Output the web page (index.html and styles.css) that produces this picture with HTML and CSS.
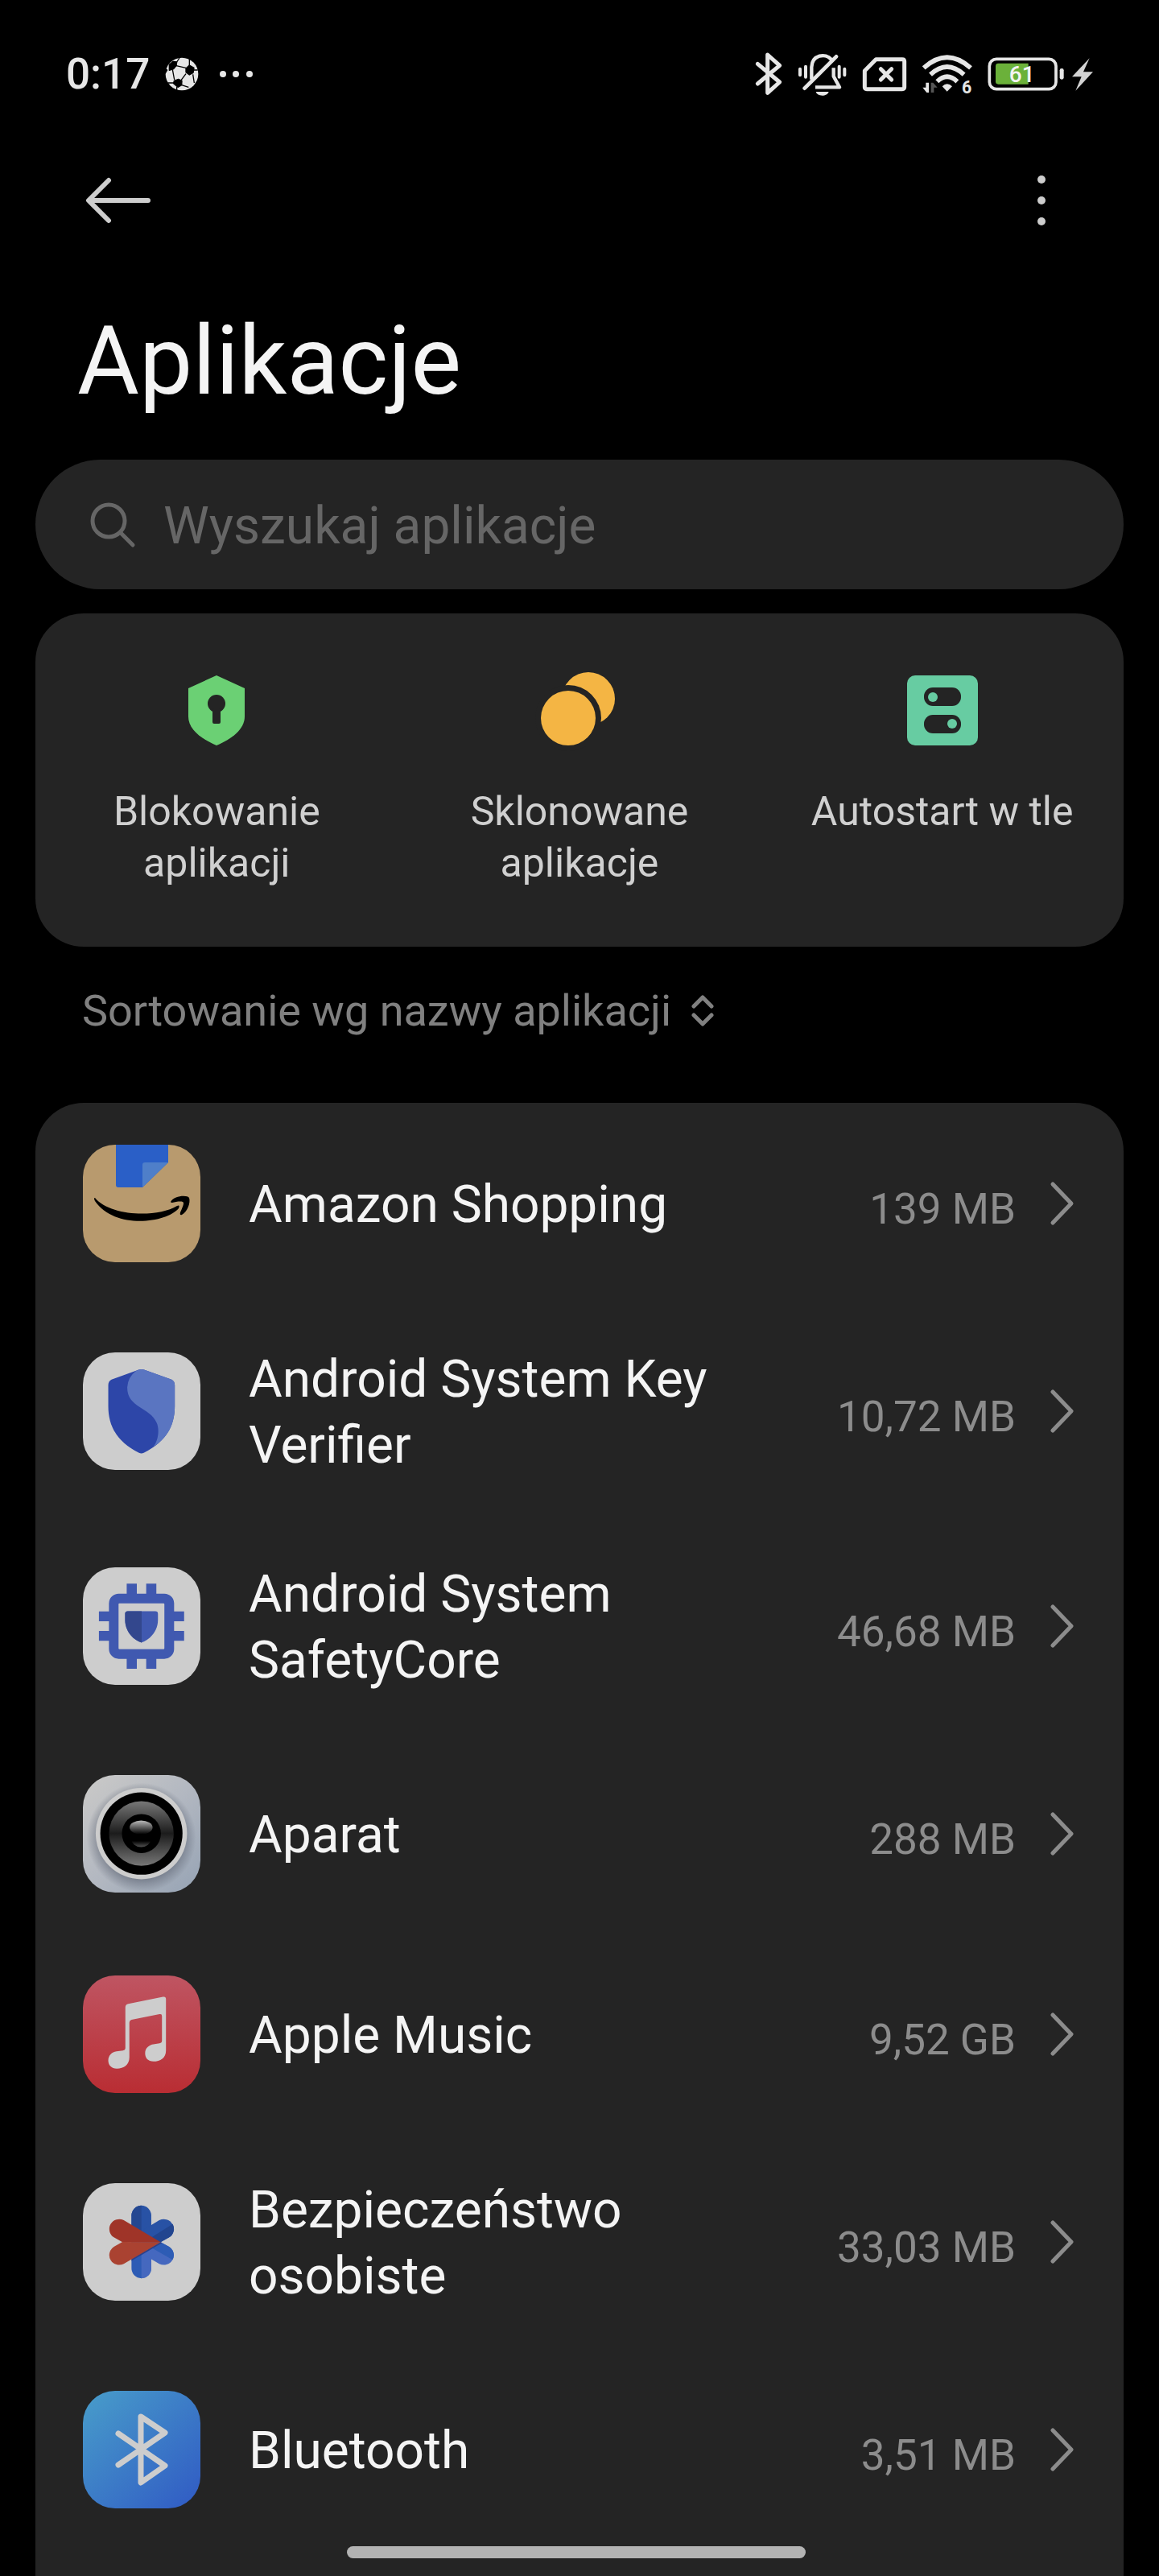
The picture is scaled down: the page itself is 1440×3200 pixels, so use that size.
FILE: index.html
```html
<!DOCTYPE html>
<html lang="pl">
<head>
  <meta charset="UTF-8">
  <title>Aplikacje</title>
  <meta name="viewport" content="width=device-width, initial-scale=1.0"/>
  <link rel="stylesheet" href="styles.css">
</head>
<body>

  <div class="status-bar">
    <div class="status-left">
      <span class="time">0:17</span>
      <svg class="ball" width="42" height="42" viewBox="436 94 126 126">
        <circle cx="499" cy="157" r="61" fill="#e6e6e6"/>
        <g fill="#000" stroke="#000" stroke-width="4" stroke-linejoin="round">
          <path d="M452 122L466 110L480 112L478 126L468 138L452 143Z"/>
          <path d="M514 136L527 124L544 134L541 152L527 160L514 150Z"/>
          <path d="M470 182L486 176L499 182L498 198L484 206L468 192Z"/>
          <path d="M553 188L562 178L556 198L546 204Z"/>
          <path d="M437 154L444 142L438 140Z"/>
        </g>
        <path d="M480 112L490 97M478 126L514 134M527 124V100M541 142H558M464 140L471 178M496 180L514 156M540 158L545 190M498 198L524 206M470 190H446M480 204V216" fill="none" stroke="#000" stroke-width="4"/>
      </svg>
      <svg class="more-dots" width="42" height="10" viewBox="0 0 42 10" fill="#e6e6e6">
        <circle cx="5" cy="5" r="4"/><circle cx="21" cy="5" r="4"/><circle cx="38" cy="5" r="4"/>
      </svg>
    </div>
    <div class="status-right">
      <svg width="35" height="54" viewBox="105 75 105 162" fill="none" stroke="#e6e6e6" stroke-width="15" stroke-linecap="round" stroke-linejoin="round">
        <path d="M115 118L197 186L152 226V84L197 124L115 192"/>
      </svg>
      <svg width="62" height="55" viewBox="266 75 186 165" fill="none" stroke="#e6e6e6" stroke-width="12" stroke-linecap="round">
        <path d="M275 137V160M296 128V167M421 128V167M441 137V160"/>
        <path d="M318 176V130C320 84 370 76 392 102" stroke-width="13" stroke-linecap="butt"/>
        <path d="M292 209L410 91" stroke-width="14"/>
        <path d="M400 133V164L422 205H332" stroke-width="13" stroke-linecap="butt" stroke-linejoin="round"/>
        <path d="M334 222H382C376 241 340 241 334 222Z" fill="#e6e6e6" stroke="none"/>
      </svg>
      <svg width="56" height="44" viewBox="510 95 168 132" fill="none" stroke="#e6e6e6" stroke-width="15" stroke-linejoin="round" stroke-linecap="round">
        <path d="M562 106H660Q668 106 668 114V210Q668 217 660 217H528Q520 217 520 210V149Z"/>
        <path d="M580 142L620 182M620 142L580 182"/>
      </svg>
      <svg width="64" height="50" viewBox="733 85 192 150" fill="none" stroke="#e6e6e6" stroke-width="17">
        <path d="M741 137Q828 58 916 137"/>
        <path d="M766 162Q828 104 891 162"/>
        <path d="M791 188Q828 152 866 188"/>
        <path d="M810 206Q828 188 847 206L828 225Z" fill="#e6e6e6" stroke="none"/>
        <path d="M760 192V229H752L737 210H749V192Z" fill="#e6e6e6" stroke="none"/>
        <path d="M768 229V192H776L792 210H779V229Z" fill="#555" stroke="none"/>
        <text class="wifi-gen" x="883" y="231">6</text>
      </svg>
      <svg width="95" height="42" viewBox="982 94 285 126">
        <rect x="989" y="101" width="248" height="112" rx="26" fill="none" stroke="#e6e6e6" stroke-width="11"/>
        <path d="M1022 117H1134V195H1022Q1012 195 1012 185V127Q1012 117 1022 117Z" fill="#6bb13a"/>
        <rect x="1251" y="136" width="15" height="41" rx="7" fill="#e6e6e6"/>
        <text class="battery-level" x="1110" y="187">61</text>
      </svg>
      <svg class="bolt" width="26" height="41" viewBox="1296 95 78 123" fill="#d2d2d2">
        <path d="M1361 96L1296 165H1331L1309 217L1374 147H1338Z"/>
      </svg>
    </div>
  </div>

  <header class="top-bar">
    <button type="button" class="icon-btn" aria-label="Wstecz">
      <svg width="82" height="58" viewBox="0 0 82 58" fill="none" stroke="#cdcdcd" stroke-width="6" stroke-linecap="round" stroke-linejoin="round">
        <path d="M78 29H5M29 4L4 29L29 54"/>
      </svg>
    </button>
    <button type="button" class="icon-btn" aria-label="Więcej opcji">
      <svg width="12" height="64" viewBox="0 0 12 64" fill="#cdcdcd">
        <circle cx="6" cy="6" r="5"/><circle cx="6" cy="32" r="5"/><circle cx="6" cy="58" r="5"/>
      </svg>
    </button>
  </header>

  <h1>Aplikacje</h1>

  <label class="search">
    <svg width="58" height="58" viewBox="0 0 58 58" fill="none" stroke="#666" stroke-width="5" stroke-linecap="round">
      <circle cx="24" cy="24" r="20"/><path d="M39 39L54 54"/>
    </svg>
    <input type="search" placeholder="Wyszukaj aplikacje" aria-label="Wyszukaj aplikacje">
  </label>

  <nav class="card quick">
    <a href="#">
      <svg width="92" height="92" viewBox="0 0 92 92">
        <path d="M46 4L81 20V55C81 71 65 83 46 91C27 83 11 71 11 55V20Z" fill="#6bd074"/>
        <circle cx="46" cy="39" r="11" fill="#242424"/>
        <rect x="41" y="45" width="10" height="19" rx="2" fill="#242424"/>
      </svg>
      Blokowanie aplikacji
    </a>
    <a href="#">
      <svg width="92" height="92" viewBox="0 0 92 92" fill="#f4b544">
        <circle cx="57" cy="33" r="33"/>
        <circle cx="32" cy="57" r="41" fill="#242424"/>
        <circle cx="32" cy="57" r="34"/>
      </svg>
      Sklonowane aplikacje
    </a>
    <a href="#">
      <svg width="92" height="92" viewBox="0 0 92 92">
        <rect x="2" y="4" width="88" height="87" rx="10" fill="#67cca2"/>
        <rect x="23" y="19" width="46" height="23" rx="11" fill="#242424"/>
        <rect x="23" y="53" width="46" height="23" rx="11" fill="#242424"/>
        <circle cx="34" cy="31" r="6" fill="#67cca2"/>
        <circle cx="58" cy="64" r="6" fill="#67cca2"/>
      </svg>
      Autostart w tle
    </a>
  </nav>

  <button type="button" class="sort">
    Sortowanie wg nazwy aplikacji
    <svg width="30" height="42" viewBox="0 0 30 42" fill="none" stroke="#808080" stroke-width="5" stroke-linecap="round" stroke-linejoin="round">
      <path d="M4 15L15 4L26 15M4 26L15 37L26 26"/>
    </svg>
  </button>

  <main class="card app-list">
    <a class="app" href="#">
      <svg class="app-icon" viewBox="0 0 146 146">
        <rect width="146" height="146" fill="#b89a6e"/>
        <path d="M41 0H106V22L74 53H44Q41 53 41 50Z" fill="#2a5fc7"/>
        <path d="M74 53V25Q74 22 77 22H106Z" fill="#4f7fc9"/>
        <path d="M15 66C34 89 92 91 117 76Q121 74 119 79C104 97 40 106 15 70Q13 66 15 66Z"/>
        <path d="M109 71C113 63 130 62 132 66C134 72 130 83 123 87Q120 88 121 84C125 75 126 72 124 71C121 70 115 71 111 72Q109 72 109 71Z"/>
      </svg>
      <span class="name">Amazon Shopping</span>
      <span class="size">139 MB</span>
      <svg class="chevron" viewBox="0 0 30 56"><path d="M4 4L27 28L4 52"/></svg>
    </a>
    <a class="app" href="#">
      <svg class="app-icon" viewBox="70 117 440 440">
        <rect x="70" y="117" width="440" height="440" fill="#cdcdcd"/>
        <path d="M279 182Q289 178 299 182L402 219Q414 225 414 240V318C414 395 378 453 298 493Q289 497 280 493C200 453 165 395 165 318V240Q165 225 177 219Z" fill="#2d46a8"/>
        <path d="M268 187L279 182Q289 178 299 182L402 219Q414 225 414 240V318C414 385 390 434 334 470C352 448 358 405 346 380C322 322 236 325 236 248Q238 210 268 187Z" fill="#5a75c1"/>
      </svg>
      <span class="name">Android System Key Verifier</span>
      <span class="size">10,72 MB</span>
      <svg class="chevron" viewBox="0 0 30 56"><path d="M4 4L27 28L4 52"/></svg>
    </a>
    <a class="app" href="#">
      <svg class="app-icon" viewBox="70 78 440 440">
        <rect x="70" y="78" width="440" height="440" fill="#cdcdcd"/>
        <path d="M234 139H272V190H234ZM307 139H345V190H307ZM234 405H272V458H234ZM307 405H345V458H307ZM130 243H180V280H130ZM130 316H180V353H130ZM400 243H449V280H400ZM400 316H449V353H400Z" fill="#4059b0"/>
        <rect x="186" y="195" width="207" height="207" rx="18" fill="none" stroke="#4059b0" stroke-width="37"/>
        <rect x="204" y="213" width="171" height="171" rx="3" fill="#cdcdcd"/>
        <path d="M238 242H341Q351 242 351 252V275C351 315 325 346 289 360C253 346 228 315 228 275V252Q228 242 238 242Z" fill="#4059b0"/>
        <path d="M238 242H290V360C253 346 228 315 228 275V252Q228 242 238 242Z" fill="#33478d"/>
      </svg>
      <span class="name">Android System SafetyCore</span>
      <span class="size">46,68 MB</span>
      <svg class="chevron" viewBox="0 0 30 56"><path d="M4 4L27 28L4 52"/></svg>
    </a>
    <a class="app" href="#">
      <svg class="app-icon" viewBox="70 72 440 440">
        <defs>
          <linearGradient id="cam-body" x1="0" y1="0" x2="1" y2="1">
            <stop offset="0" stop-color="#cbcac8"/><stop offset=".5" stop-color="#b3b8c1"/><stop offset="1" stop-color="#96a3b4"/>
          </linearGradient>
          <radialGradient id="cam-shade">
            <stop offset=".75" stop-color="#5a6170" stop-opacity=".6"/><stop offset="1" stop-color="#5a6170" stop-opacity="0"/>
          </radialGradient>
          <linearGradient id="cam-ring" x1="0" y1="0" x2="0" y2="1">
            <stop offset="0" stop-color="#777"/><stop offset=".5" stop-color="#1c1c1c"/><stop offset="1" stop-color="#777"/>
          </linearGradient>
          <linearGradient id="cam-glare" x1="0" y1="0" x2="0" y2="1">
            <stop offset="0" stop-color="#bbb"/><stop offset="1" stop-color="#000"/>
          </linearGradient>
          <linearGradient id="cam-glow" x1="0" y1="0" x2="0" y2="1">
            <stop offset=".6" stop-color="#000"/><stop offset="1" stop-color="#555"/>
          </linearGradient>
        </defs>
        <rect x="70" y="72" width="440" height="440" fill="url(#cam-body)"/>
        <circle cx="289" cy="306" r="205" fill="url(#cam-shade)"/>
        <circle cx="289" cy="291" r="171" fill="#cdcdcd"/>
        <circle cx="289" cy="291" r="154"/>
        <circle cx="289" cy="291" r="121" fill="url(#cam-ring)"/>
        <circle cx="289" cy="291" r="73"/>
        <ellipse cx="288" cy="313" rx="36" ry="29" fill="url(#cam-glow)"/>
        <ellipse cx="288" cy="268" rx="43" ry="26" fill="url(#cam-glare)"/>
      </svg>
      <span class="name">Aparat</span>
      <span class="size">288 MB</span>
      <svg class="chevron" viewBox="0 0 30 56"><path d="M4 4L27 28L4 52"/></svg>
    </a>
    <a class="app" href="#">
      <svg class="app-icon" viewBox="70 69 440 440">
        <defs>
          <linearGradient id="music" x1="0" y1="0" x2="0" y2="1">
            <stop offset="0" stop-color="#bf5562"/><stop offset="1" stop-color="#b92d33"/>
          </linearGradient>
        </defs>
        <rect x="70" y="69" width="440" height="440" fill="url(#music)"/>
        <path d="M229 188Q229 177 240 175L370 149Q381 147 381 158V350C381 378 360 391 334 391C314 391 303 378 303 360C303 341 316 330 334 327L357 323Q366 321 366 313V221Q366 212 357 214L252 235Q244 237 244 245V376C244 404 223 418 197 418C177 418 165 405 165 388C165 368 178 356 196 353L220 350Q229 348 229 340Z" fill="#cdcdcd"/>
      </svg>
      <span class="name">Apple Music</span>
      <span class="size">9,52 GB</span>
      <svg class="chevron" viewBox="0 0 30 56"><path d="M4 4L27 28L4 52"/></svg>
    </a>
    <a class="app" href="#">
      <svg class="app-icon" viewBox="70 63 440 440">
        <rect x="70" y="63" width="440" height="440" fill="#cdcdcd"/>
        <path d="M252 290V184A37 37 0 0 1 326 184V290Z" fill="#2852a5"/>
        <path d="M252 290V184A37 37 0 0 1 289 147V290Z" fill="#244791"/>
        <path d="M289 283V242L356 202A37 37 0 0 1 393 266L361 284Z" fill="#2852a5"/>
        <path d="M289 290L406 216A37 37 0 0 1 393 266L361 284Z" fill="#22458f"/>
        <path d="M252 283V382A37 37 0 0 0 326 382V283Z" fill="#2d5cb5"/>
        <path d="M289 283V419A37 37 0 0 0 326 382V283Z" fill="#4568bf"/>
        <path d="M289 283V326L356 365A37 37 0 0 0 393 301L361 284Z" fill="#4568bf"/>
        <path d="M289 283L406 350A37 37 0 0 0 393 301L361 284Z" fill="#2d5cb5"/>
        <path d="M252 346V354L366 287L361 284Z" fill="#2b418a"/>
        <path d="M218 284L186 266A37 37 0 0 1 223 202L361 284Z" fill="#9f3428"/>
        <path d="M218 283L186 301A37 37 0 0 0 223 365L361 284Z" fill="#aa4231"/>
      </svg>
      <span class="name">Bezpieczeństwo osobiste</span>
      <span class="size">33,03 MB</span>
      <svg class="chevron" viewBox="0 0 30 56"><path d="M4 4L27 28L4 52"/></svg>
    </a>
    <a class="app" href="#">
      <svg class="app-icon" viewBox="0 0 146 146">
        <defs>
          <linearGradient id="bt" x1="0" y1="0" x2="1" y2="1">
            <stop offset="0" stop-color="#489dca"/><stop offset="1" stop-color="#305ac4"/>
          </linearGradient>
        </defs>
        <rect width="146" height="146" fill="url(#bt)"/>
        <path d="M44 53L102 93L72 114V32L102 52L44 92" fill="none" stroke="#cdcdcd" stroke-width="7" stroke-linecap="round" stroke-linejoin="round"/>
      </svg>
      <span class="name">Bluetooth</span>
      <span class="size">3,51 MB</span>
      <svg class="chevron" viewBox="0 0 30 56"><path d="M4 4L27 28L4 52"/></svg>
    </a>
  </main>

  <div class="home-indicator"></div>

</body>
</html>
```
FILE: styles.css
```css
* {
  box-sizing: border-box;
}
body {
  background-color: #000;
  color: #f4f4f4;
  font-family: Roboto, "Noto Sans", sans-serif;
  display: flex;
  flex-direction: column;
  min-height: 100vh;
  margin: 0;
  padding: 0 44px;
}
svg {
  display: block;
  flex-shrink: 0;
  overflow: visible;
}
a {
  color: inherit;
  text-decoration: none;
}
button {
  background: none;
  border: none;
  padding: 0;
  font-family: inherit;
  cursor: pointer;
}

/* status bar */
.status-bar {
  display: flex;
  justify-content: space-between;
  align-items: center;
  height: 184px;
  padding: 0 38px;
}
.status-left,
.status-right {
  display: flex;
  align-items: center;
  gap: 19px;
}
.status-right {
  gap: 18px;
}
.time {
  color: #e6e6e6;
  font-size: 53px;
  font-weight: 500;
}
.more-dots {
  margin-left: 6px;
}
.bolt {
  margin-left: -8px;
}
.wifi-gen {
  fill: #e6e6e6;
  stroke: none;
  font-size: 64px;
  font-weight: 700;
}
.battery-level {
  fill: #f4f4f4;
  font-size: 84px;
  font-weight: 500;
  text-anchor: middle;
}

/* header */
.top-bar {
  display: flex;
  justify-content: space-between;
  align-items: center;
  height: 130px;
  padding: 0 96px 0 62px;
}
h1 {
  font-size: 118px;
  line-height: 140px;
  font-weight: 400;
  margin: 65px 52px 52px;
}

.search {
  display: flex;
  align-items: center;
  gap: 34px;
  height: 161px;
  padding: 0 67px;
  border-radius: 81px;
  background-color: #242424;
}
.search input {
  flex: 1;
  min-width: 0;
  padding: 4px 0 0;
  background: none;
  border: none;
  outline: none;
  color: #f4f4f4;
  font-family: inherit;
  font-size: 64px;
}
.search input::placeholder {
  color: #666;
  opacity: 1;
}

.card {
  background-color: #242424;
  border-radius: 60px;
}

/* shortcuts */
.quick {
  display: grid;
  grid-template-columns: repeat(3, 1fr);
  margin-top: 30px;
  padding: 73px 0 72px;
}
.quick a {
  display: flex;
  flex-direction: column;
  align-items: center;
  gap: 49px;
  padding: 0 50px;
  color: #d0d0d0;
  font-size: 50px;
  line-height: 64px;
  text-align: center;
}

.sort {
  display: flex;
  align-items: center;
  align-self: flex-start;
  gap: 24px;
  margin: 48px 58px 82px;
  color: #808080;
  font-size: 54px;
  line-height: 64px;
}

/* application list */
.app-list {
  flex: 1;
  border-radius: 60px 60px 0 0;
}
.app {
  display: flex;
  align-items: center;
  min-height: 249px;
  padding: 50px 62px 49px 59px;
}
.app-icon {
  width: 146px;
  height: 146px;
  border-radius: 40px;
  overflow: hidden;
}
.name {
  max-width: 660px;
  padding-top: 4px;
  margin-left: 60px;
  font-size: 64px;
  line-height: 82px;
}
.size {
  margin-left: auto;
  padding-top: 14px;
  color: #8c8c8c;
  font-size: 53px;
  line-height: 64px;
  white-space: nowrap;
}
.chevron {
  width: 30px;
  height: 56px;
  margin-left: 42px;
  fill: none;
  stroke: #8c8c8c;
  stroke-width: 5px;
  stroke-linecap: round;
  stroke-linejoin: round;
}

.home-indicator {
  position: fixed;
  bottom: 22px;
  left: 50%;
  width: 570px;
  height: 15px;
  margin-left: -289px;
  border-radius: 8px;
  background-color: #b3b3b3;
}
```
